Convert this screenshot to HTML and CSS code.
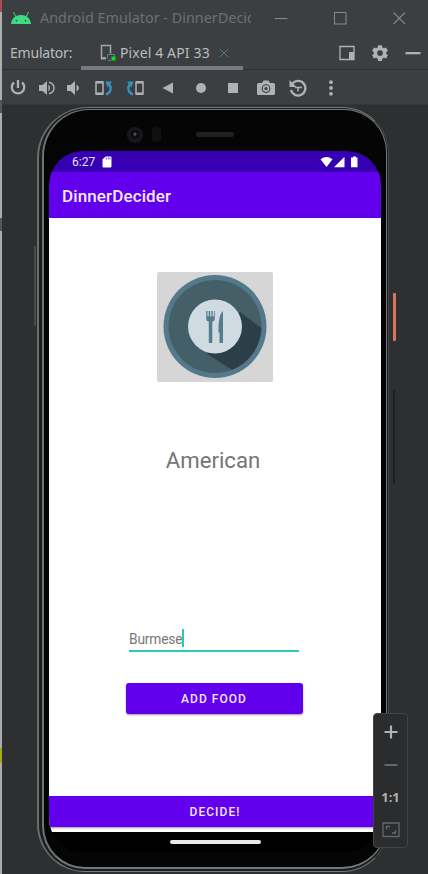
FILE: index.html
```html
<!DOCTYPE html>
<html lang="en">
<head>
<meta charset="utf-8">
<title>Android Emulator - DinnerDecider</title>
<link rel="stylesheet" href="styles.css">
</head>
<body>
<div class="desktop">
<div class="backdrop"><i class="red"></i><i class="mark"></i><i class="mark two"></i><i class="yellow"></i></div>
<main class="window">
  <header class="titlebar">
    <svg class="android" width="22" height="14" viewBox="0 0 22 14"><path d="M1 13C1.400 8.500 4.500 4 11 4S20.600 8.500 21 13z" fill="#3ddc84"/><path d="M3.500 1 6 6M18.500 1 16 6" stroke="#3ddc84" stroke-width="1"/><circle cx="6.500" cy="9.700" r=".9" fill="#285b42"/><circle cx="15.500" cy="9.700" r=".9" fill="#285b42"/></svg>
    <span class="title">Android Emulator - DinnerDecid</span>
    <div class="controls">
      <svg width="14" height="14" viewBox="0 0 14 14"><path d="M1 7.500h12.500"/></svg>
      <svg width="14" height="14" viewBox="0 0 14 14"><path d="M1.500 1.500h11.500v11.500H1.500z"/></svg>
      <svg width="14" height="14" viewBox="0 0 14 14"><path d="m1.500 1.500 11.500 11.500M13 1.500 1.500 13"/></svg>
    </div>
  </header>
  <nav class="tabs">
    <span class="label">Emulator:</span>
    <div class="tab">
      <svg width="17" height="18" viewBox="0 0 17 18"><path d="M5.500 14H1.500V1.500h9v8" fill="none" stroke="#a2a7aa" stroke-width="1.500"/><path d="M1 13.500h5v2H1z" fill="#a2a7aa"/><path d="M7.500 14.500v-4h7v2M8 16.500h3" fill="none" stroke="#6c7c91"/><path d="M11.500 12.500h4v4h-4z" fill="#0be40b"/></svg>
      <span>Pixel 4 API 33</span>
      <svg class="close" width="10" height="10" viewBox="0 0 10 10"><path d="m1 1 8 8M9 1 1 9"/></svg>
    </div>
    <div class="tools">
      <svg width="16" height="16" viewBox="0 0 16 16"><path d="M1 1.500h14v13H1z" fill="none" stroke="#afb1b3" stroke-width="1.300"/><path d="M10 7h5v8h-5z" fill="#afb1b3"/></svg>
      <svg width="18" height="18" viewBox="0 0 24 24"><path fill="#afb1b3" fill-rule="evenodd" d="M9.500 1.500h5l.6 3 2 1.200 3-1 2.400 4.300-2.300 2v2l2.300 2-2.400 4.300-3-1-2 1.200-.6 3h-5l-.6-3-2-1.200-3 1L1.500 15l2.300-2v-2L1.500 9l2.400-4.300 3 1 2-1.200zM12 8.200a3.800 3.800 0 1 0 0 7.600 3.800 3.800 0 0 0 0-7.600"/></svg>
      <svg width="16" height="16" viewBox="0 0 16 16"><path d="M.5 7h15v2.300H.5z" fill="#afb1b3"/></svg>
    </div>
  </nav>
  <section class="toolbar">
    <svg width="18" height="18" viewBox="0 0 18 18"><path d="M9 1v8M5 3.500a6.200 6.200 0 1 0 8 0" fill="none" stroke="#afb1b3" stroke-width="2.300"/></svg>
    <svg width="18" height="18" viewBox="0 0 18 18"><path d="M1 6h3.500L9 2v14l-4.500-4H1z" fill="#afb1b3"/><path d="M10.500 6.300q2.500 2.700 0 5.400" fill="#afb1b3" stroke="#afb1b3"/><path d="M11 3.300c6.700 2 6.700 9.400 0 11.400" fill="none" stroke="#afb1b3" stroke-width="1.500"/></svg>
    <svg width="18" height="18" viewBox="0 0 18 18"><path d="M2 6h3.500L10 2v14l-4.500-4H2z" fill="#afb1b3"/><path d="M11.500 5.500q5 3.500 0 7z" fill="#afb1b3"/></svg>
    <svg width="20" height="18" viewBox="0 0 20 18"><path d="M2 3h7v12H2z" fill="none" stroke="#afb1b3" stroke-width="1.500"/><path d="M2 3.200h7M2 14.800h7" stroke="#afb1b3" stroke-width="2.400"/><path d="M12 15.500c4.500-1.500 6-6 3.500-10" fill="none" stroke="#3592c4" stroke-width="2.500"/><path d="M11.500 2.500h6.500l-4.500 6z" fill="#3592c4"/></svg>
    <svg width="20" height="18" viewBox="0 0 20 18"><path d="M11 3h7v12h-7z" fill="none" stroke="#afb1b3" stroke-width="1.500"/><path d="M11 3.200h7M11 14.800h7" stroke="#afb1b3" stroke-width="2.400"/><path d="M8 15.500C3.500 14 2 9.500 4.500 5.500" fill="none" stroke="#3592c4" stroke-width="2.500"/><path d="M8.500 2.500H2l4.500 6z" fill="#3592c4"/></svg>
    <svg width="18" height="18" viewBox="0 0 18 18"><path d="M14 3.500v11L3.500 9z" fill="#afb1b3"/></svg>
    <svg width="18" height="18" viewBox="0 0 18 18"><circle cx="9" cy="9" r="5" fill="#afb1b3"/></svg>
    <svg width="18" height="18" viewBox="0 0 18 18"><path d="M4 4h10v10H4z" fill="#afb1b3"/></svg>
    <svg width="20" height="18" viewBox="0 0 20 18"><path fill="#afb1b3" fill-rule="evenodd" d="M2.500 4H6l1.500-2.500h5L14 4h3.500q1.500 0 1.500 1.500v9q0 1.500-1.500 1.500h-15Q1 16 1 14.500v-9Q1 4 2.500 4M10 5.200a4.400 4.400 0 1 0 0 8.800 4.400 4.400 0 0 0 0-8.800"/><circle cx="10" cy="9.600" r="2.500" fill="none" stroke="#afb1b3" stroke-width="1.600"/></svg>
    <svg width="20" height="20" viewBox="0 0 20 20"><path d="M4.500 5.500A7.300 7.300 0 1 1 3 12" fill="none" stroke="#afb1b3" stroke-width="2.300"/><path d="M1.500 2v7h7z" fill="#afb1b3"/><path d="M10 13.500v-4h4" fill="none" stroke="#afb1b3" stroke-width="1.500"/><path d="M7 9.500h4" stroke="#afb1b3" stroke-width="1.300"/></svg>
    <svg width="18" height="18" viewBox="0 0 18 18"><g fill="#afb1b3"><circle cx="9" cy="3.200" r="1.900"/><circle cx="9" cy="9" r="1.900"/><circle cx="9" cy="14.800" r="1.900"/></g></svg>
  </section>
  <section class="stage">
    <div class="phone">
      <i class="key left"></i><i class="key power"></i><i class="key volume"></i>
      <div class="body">
        <div class="bezel">
          <div class="sensors"><i class="camera"></i><i class="sensor"></i><i class="speaker"></i></div>
          <div class="screen">
            <div class="status">
              <span>6:27</span>
              <svg width="10" height="12" viewBox="0 0 10 12"><path fill="#fff" d="M3.500.5h5q1 0 1 1v9q0 1-1 1h-7q-1 0-1-1v-7z"/><path d="M4.200 1.500v2M6.200 1.500v2M8 1.500v2" stroke="#3700b3" stroke-width=".7"/></svg>
              <svg class="signals" width="38" height="12" viewBox="0 0 38 12"><path fill="#fff" d="M.5 3.200Q6.500-1.200 12.500 3.200L6.500 11zM24.500.8v10.500H14zM31 1.500h2V.5h3v1h1.500v9.800H31z"/></svg>
            </div>
            <div class="appbar">DinnerDecider</div>
            <div class="content">
              <svg class="plate" width="116" height="110" viewBox="0 0 116 110"><path d="M0 0h116v110H0z" fill="#d6d6d6"/><circle cx="58" cy="54.500" r="51.500" fill="#54798a"/><circle cx="58" cy="54.500" r="46.500" fill="#455f69"/><path d="m83 40 21.400 16A46.500 46.500 0 0 1 75 97.800L50 82z" fill="#2c3f49"/><circle cx="58" cy="54.500" r="27" fill="#cfdbe1"/><path d="M49.200 39h1.300v5.500h1.200V39h1.500v5.500h1.200V39h1.300v5.500h1.200V39h.9v8q0 2-2.500 2.700V71h-3.500V49.700q-2.600-.7-2.600-2.700zM66 39q-4.500 3-4.500 18.500v3h1V71H66z" fill="#557b8d"/></svg>
              <h1>American</h1>
              <div class="field"><span>Burmese</span><i></i></div>
              <button class="add">ADD FOOD</button>
              <button class="decide">DECIDE!</button>
            </div>
            <div class="gesture"><i></i></div>
          </div>
        </div>
      </div>
    </div>
    <aside class="zoom">
      <svg width="16" height="16" viewBox="0 0 16 16"><path d="M8 1.500v13M1.500 8h13" stroke="#afb1b3" stroke-width="2.200"/></svg>
      <svg width="16" height="16" viewBox="0 0 16 16"><path d="M1.500 8h13" stroke="#656769" stroke-width="2"/></svg>
      <span>1:1</span>
      <svg width="18" height="16" viewBox="0 0 18 16"><path d="M1 1h16v13.500H1z" fill="none" stroke="#656769" stroke-width="1.300"/><path d="M4.500 7.500v-3H8M13.500 8v3H10" fill="none" stroke="#656769" stroke-width="1.300"/></svg>
    </aside>
  </section>
</main>
</div>
</body>
</html>
```
FILE: styles.css
```css
* { box-sizing: border-box; }
body { margin: 0; background: #2d2f31; font-family: Roboto, sans-serif; }
svg { display: block; flex: none; }
.desktop { display: flex; width: 428px; height: 874px; overflow: hidden; }
.backdrop { width: 2px; flex: none; background: #abadae; }
.backdrop i { display: block; height: 12px; background: #b34b4b; }
.backdrop .mark { height: 13px; margin-top: 88px; background: #555859; }
.backdrop .two { margin-top: 105px; }
.backdrop .yellow { height: 15px; margin-top: 517px; background: #aaa71b; }
.window { width: 426px; height: 874px; display: flex; flex-direction: column; background: #3c3f41; }

.titlebar { height: 36px; display: flex; align-items: center; padding-left: 8px; color: #6d7072; }
.android { margin-bottom: 1px; }
.title { width: 211px; margin-left: 8px; overflow: hidden; white-space: nowrap; font: 14.400px/24px "Noto Sans", sans-serif; }
.controls { display: flex; gap: 45px; margin-left: 23px; }
.controls path { fill: none; stroke: #85888a; stroke-width: 1.100; }

.tabs { height: 34px; display: flex; align-items: stretch; border-bottom: 1px solid #2c2e30; color: #b9bcbe; font: 14px "Noto Sans", sans-serif; }
.label { width: 79px; padding-left: 8px; line-height: 34px; letter-spacing: -.2px; }
.tab { width: 162px; height: 34px; display: flex; align-items: center; padding-left: 19px; border-bottom: 4px solid #747a80; line-height: 30px; white-space: nowrap; }
.tab span { width: 90px; margin-left: 3px; padding-top: 4px; letter-spacing: .14px; }
.tab svg { margin-top: 4px; }
.tab .close { margin-left: 9px; }
.close path { stroke: #6e7173; stroke-width: 1; }
.tools { display: flex; align-items: center; gap: 16px; margin-left: 96px; }

.toolbar { height: 35px; flex: none; display: grid; grid-template-columns: 32px 26px 28px 31px 32px 33px 33px 32px 33px 32px 33px; place-items: center; align-content: center; padding-top: 1px; border-bottom: 1px solid #33363a; }
.stage { position: relative; height: 769px; flex: none; padding: 2px 0 0 35px; background: #2d2f31; }
.phone { position: relative; width: 352px; height: 765px; }
.body { height: 765px; padding: 1px 1px 2px 3px; border: 1px solid #77797a; border-left: 2px solid #6a6d6d; border-right-color: #454749; border-radius: 51px 47px 47px 48px; background: #1b1d1e; }
.bezel { height: 760px; padding: 0 6px 0 6px; border: 1px solid #747778; border-left: 2px solid #717475; border-bottom-width: 2px; border-radius: 47px 43px 45px 43px; background: #050506; }
.key { position: absolute; width: 3px; background: #484a4c; border-radius: 1px; }
.key.left { left: -3px; top: 139px; height: 80px; width: 2px; }
.key.power { right: -7px; top: 186px; height: 48px; background: #d9745f; }
.key.volume { right: -6px; top: 283px; height: 94px; width: 2px; background: #1d1f20; }
.sensors { height: 41px; display: flex; align-items: center; padding: 8px 0 0 77px; }
.camera { width: 16px; height: 16px; border-radius: 50%; background: radial-gradient(circle at 50% 45%, #555 0 1px, #0b0c0f 2px 4px, #17181a 5px); }
.sensor { width: 9px; height: 15px; margin-left: 9px; border-radius: 4px; background: #0f1011; }
.speaker { width: 38px; height: 5px; margin-left: 35px; border-radius: 3px; background: #202122; }
.screen { width: 332px; height: 701px; margin-left: -1px; overflow: hidden; border-radius: 34px; background: #000; }
.status { height: 21px; display: flex; align-items: center; padding: 1px 23px 0 23px; background: #3700b3; color: #fff; font-size: 12px; }
.status span { width: 30px; color: #e9e2f6; }
.signals { margin-left: auto; }
.appbar { height: 46px; padding-left: 13px; line-height: 48px; background: #6200ee; color: #f4eafe; font-size: 17px; letter-spacing: .12px; font-weight: 500; }
.content { height: 614px; display: flex; flex-direction: column; align-items: center; padding: 54px 1px 0 0; background: #fff; }
.plate { border-radius: 2px; }
h1 { margin: 63px 0 0; font-size: 22.200px; line-height: 30px; font-weight: 400; color: #757575; padding-right: 3px; }
.field { width: 170px; height: 24px; margin-top: 153px; display: flex; align-items: flex-start; border-bottom: 2px solid #29cbb5; color: #777; font-size: 13.800px; line-height: 20px; letter-spacing: -.2px; }
.field span { margin-top: 1px; }
.field i { width: 2px; height: 18px; margin-top: 1px; background: #29cbb5; }
button { border: 0; padding: 0; background: #6200ee; color: #f1e5ff; font: 500 12px Roboto, sans-serif; letter-spacing: 1.050px; box-shadow: 0 1px 2px #0006; }
.field { margin-left: -1px; }
.add { width: 177px; height: 31px; margin: 31px 0 0 -1px; border-radius: 3px; }
.decide { width: 332px; height: 31px; flex: none; margin: 82px -1px 0 0; }
.gesture { height: 20px; display: grid; place-items: center; }
.gesture i { width: 91px; height: 4px; border-radius: 2px; background: #e8e8e8; }
.zoom { position: absolute; left: 371px; top: 608px; width: 35px; height: 135px; display: flex; flex-direction: column; align-items: center; justify-content: space-between; padding: 10px 0 9px; border: 1px solid #424446; border-radius: 4px; background: #2b2c2d; color: #afb1b3; font: bold 13px/16px "Open Sans", sans-serif; }
```
